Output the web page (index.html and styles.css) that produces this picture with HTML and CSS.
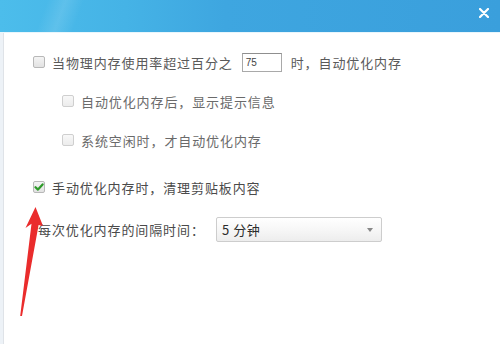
FILE: index.html
```html
<!DOCTYPE html>
<html lang="zh">
<head>
<meta charset="utf-8">
<link rel="stylesheet" href="styles.css">
</head>
<body>
<div class="window">
  <div class="titlebar">
    <div class="shine"></div>
    <svg class="close" width="10" height="10" viewBox="0 0 10 10"><path d="M1 1 L9 9 M9 1 L1 9" stroke="#fff" stroke-width="2.2" stroke-linecap="round"/></svg>
  </div>
  <div class="body">
    <div class="side"></div>
    <div class="content">
      <div class="row r1">
        <span class="cb"></span>
        <span class="label">当物理内存使用率超过百分之</span>
        <span class="num">75</span>
        <span class="label">时，自动优化内存</span>
      </div>
      <div class="row sub r2">
        <span class="cb"></span>
        <span class="label">自动优化内存后，显示提示信息</span>
      </div>
      <div class="row sub r3">
        <span class="cb"></span>
        <span class="label">系统空闲时，才自动优化内存</span>
      </div>
      <div class="row r4">
        <span class="cb checked"><svg viewBox="0 0 10 10" width="10" height="10"><path d="M1.5 5.2 L4 7.6 L8.6 2.4" fill="none" stroke="#2e9a2a" stroke-width="2.2" stroke-linecap="round" stroke-linejoin="round"/></svg></span>
        <span class="label dark">手动优化内存时，清理剪贴板内容</span>
      </div>
      <div class="row r5">
        <span class="label dark interval">每次优化内存的间隔时间：</span>
        <div class="select"><span>5 分钟</span><span class="caret"></span></div>
      </div>
    </div>
  </div>
  <svg class="arrow" width="500" height="344" viewBox="0 0 500 344">
    <path d="M35.5 207 L43 226 L38.6 225 L22 316 L20.2 316 L31.5 223.8 L25.5 228 Z" fill="#ea2c2c"/>
  </svg>
</div>
</body>
</html>
```

FILE: styles.css
```css
* { box-sizing: border-box; }
html, body { margin: 0; padding: 0; }
body {
  width: 500px;
  height: 344px;
  overflow: hidden;
  background: #fff;
  font-family: "Noto Sans CJK SC", "Microsoft YaHei", sans-serif;
}
.window {
  position: relative;
  width: 500px;
  height: 344px;
  display: flex;
  flex-direction: column;
}
.titlebar {
  position: relative;
  height: 32px;
  flex: none;
  background: linear-gradient(90deg, #4cbdeb 0%, #45b3e6 25%, #3ea6e0 45%, #3a9fdc 100%);
  display: flex;
  justify-content: flex-end;
  align-items: flex-start;
  padding: 8px 11px 0 0;
  overflow: hidden;
}
.shine {
  position: absolute;
  left: 20px;
  top: 0;
  width: 80px;
  height: 32px;
  background: linear-gradient(110deg, rgba(255,255,255,0) 30%, rgba(255,255,255,0.12) 50%, rgba(255,255,255,0) 70%);
}
.close { display: block; }
.body {
  flex: 1;
  display: flex;
  border-top: 1px solid #e9f6fc;
}
.side {
  width: 4px;
  flex: none;
  background: #edf2f7;
  border-right: 1px solid #dfe3e8;
}
.content {
  flex: 1;
  padding: 19px 0 0 29px;
  display: flex;
  flex-direction: column;
}
.row {
  display: flex;
  align-items: center;
  height: 20px;
  font-size: 13px;
  letter-spacing: 0.9px;
  color: #5a5a5a;
}
.sub { padding-left: 29px; }
.r2 { margin-top: 19px; }
.r3 { margin-top: 19px; }
.r4 { margin-top: 27px; }
.r5 { margin-top: 20px; height: 25px; padding-left: 5px; }
.cb {
  width: 12px;
  height: 12px;
  border: 1px solid #b8b8b8;
  border-radius: 2px;
  background: linear-gradient(180deg, #f4f4f4, #e2e2e2);
  margin-right: 7px;
  flex: none;
  display: flex;
  align-items: center;
  justify-content: center;
}
.sub .cb { border-color: #cfcfcf; background: linear-gradient(180deg, #f8f8f8, #ececec); }
.sub .label { color: #6a6a6a; }
.label { white-space: nowrap; }
.dark { color: #4a4a4a; }
.num {
  width: 40px;
  height: 19px;
  border: 1px solid #a9a9a9;
  border-top-color: #8f8f8f;
  background: #fff;
  font-family: "Liberation Sans", sans-serif;
  font-size: 10px;
  letter-spacing: 0;
  color: #444;
  padding-left: 3px;
  line-height: 17px;
  margin: 0 9px 0 9px;
  flex: none;
}
.interval { width: 178px; }
.select {
  width: 166px;
  height: 25px;
  border: 1px solid #cdcdcd;
  border-radius: 2px;
  background: linear-gradient(180deg, #ffffff 0%, #f7f7f7 50%, #ededed 100%);
  display: flex;
  align-items: center;
  justify-content: space-between;
  padding: 0 8px 0 5px;
  color: #2c2c2c;
  font-size: 13px;
  letter-spacing: 0.5px;
}
.caret {
  width: 0;
  height: 0;
  border-left: 3px solid transparent;
  border-right: 3px solid transparent;
  border-top: 4px solid #888;
}
.arrow {
  position: absolute;
  left: 0;
  top: 0;
  pointer-events: none;
}
```
